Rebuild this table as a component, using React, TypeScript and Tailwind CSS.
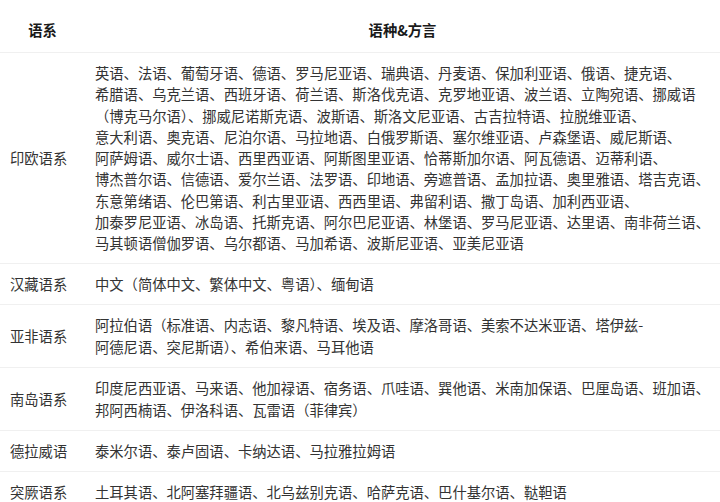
const rows: { family: string; lines: string[] }[] = [
  {
    family: '印欧语系',
    lines: [
      '英语、法语、葡萄牙语、德语、罗马尼亚语、瑞典语、丹麦语、保加利亚语、俄语、捷克语、',
      '希腊语、乌克兰语、西班牙语、荷兰语、斯洛伐克语、克罗地亚语、波兰语、立陶宛语、挪威语',
      '（博克马尔语）、挪威尼诺斯克语、波斯语、斯洛文尼亚语、古吉拉特语、拉脱维亚语、',
      '意大利语、奥克语、尼泊尔语、马拉地语、白俄罗斯语、塞尔维亚语、卢森堡语、威尼斯语、',
      '阿萨姆语、威尔士语、西里西亚语、阿斯图里亚语、恰蒂斯加尔语、阿瓦德语、迈蒂利语、',
      '博杰普尔语、信德语、爱尔兰语、法罗语、印地语、旁遮普语、孟加拉语、奥里雅语、塔吉克语、',
      '东意第绪语、伦巴第语、利古里亚语、西西里语、弗留利语、撒丁岛语、加利西亚语、',
      '加泰罗尼亚语、冰岛语、托斯克语、阿尔巴尼亚语、林堡语、罗马尼亚语、达里语、南非荷兰语、',
      '马其顿语僧伽罗语、乌尔都语、马加希语、波斯尼亚语、亚美尼亚语',
    ],
  },
  { family: '汉藏语系', lines: ['中文（简体中文、繁体中文、粤语）、缅甸语'] },
  {
    family: '亚非语系',
    lines: [
      '阿拉伯语（标准语、内志语、黎凡特语、埃及语、摩洛哥语、美索不达米亚语、塔伊兹-',
      '阿德尼语、突尼斯语）、希伯来语、马耳他语',
    ],
  },
  {
    family: '南岛语系',
    lines: [
      '印度尼西亚语、马来语、他加禄语、宿务语、爪哇语、巽他语、米南加保语、巴厘岛语、班加语、',
      '邦阿西楠语、伊洛科语、瓦雷语（菲律宾）',
    ],
  },
  { family: '德拉威语', lines: ['泰米尔语、泰卢固语、卡纳达语、马拉雅拉姆语'] },
  { family: '突厥语系', lines: ['土耳其语、北阿塞拜疆语、北乌兹别克语、哈萨克语、巴什基尔语、鞑靼语'] },
]

export default function App() {
  return (
    <div
      className="w-[720px] h-[502px] overflow-hidden bg-white text-[#333333]"
      style={{ fontFamily: '"Noto Sans CJK SC", "Noto Sans", sans-serif' }}
    >
      {/* Header */}
      <div className="grid grid-cols-[85px_1fr] h-[53px] border-b border-[#f0f0f0] text-[14.3px] font-bold text-[#1a1a1a]">
        <div className="flex items-center justify-center pt-[7px]">语系</div>
        <div className="flex items-center justify-center pt-[7px]">语种&amp;方言</div>
      </div>

      {/* Rows */}
      {rows.map((row, idx) => (
        <div
          key={row.family}
          className={`grid grid-cols-[85px_1fr] border-b border-[#f0f0f0] text-[14.3px] ${
            idx === 0 ? 'leading-[21.3px]' : 'leading-[22px]'
          }`}
        >
          <div className="flex items-center pl-[10px]">{row.family}</div>
          <div className="pl-[10px] py-[9px]">
            {row.lines.map((line, i) => (
              <div key={i} className="whitespace-nowrap">
                {line}
              </div>
            ))}
          </div>
        </div>
      ))}
    </div>
  )
}
